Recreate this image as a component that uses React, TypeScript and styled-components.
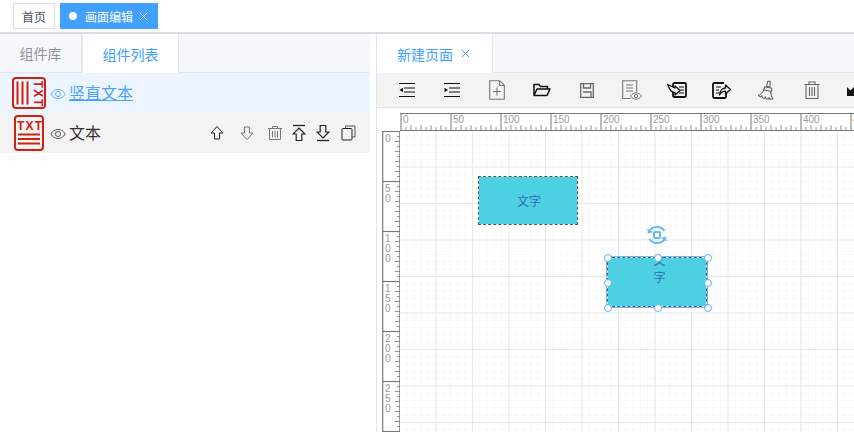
import React from 'react';
import styled, { createGlobalStyle } from 'styled-components';

const GlobalStyle = createGlobalStyle`
  html, body {
    margin: 0;
    padding: 0;
    background: #fff;
    overflow: hidden;
  }
  * {
    box-sizing: border-box;
  }
  body {
    font-family: "Liberation Sans", "Noto Sans CJK SC", sans-serif;
  }
`;

const Page = styled.div`
  width: 854px;
  height: 432px;
  display: flex;
  flex-direction: column;
  overflow: hidden;
`;

const TopBar = styled.div`
  height: 34px;
  flex-shrink: 0;
  display: flex;
  align-items: flex-start;
  gap: 5px;
  padding: 3px 0 0 13px;
  border-bottom: 2px solid #d8dce5;
`;

const TopTab = styled.div<{ $active?: boolean }>`
  height: 26px;
  display: flex;
  align-items: center;
  padding: ${(p) => (p.$active ? '0 9px 0 8px' : '0 8px')};
  font-size: 12px;
  color: ${(p) => (p.$active ? '#fff' : '#495060')};
  background: ${(p) => (p.$active ? '#42a0ff' : '#fff')};
  border: 1px solid ${(p) => (p.$active ? '#42a0ff' : '#d8dce5')};
`;

const Dot = styled.span`
  width: 8px;
  height: 8px;
  border-radius: 50%;
  background: #fff;
  margin-right: 8px;
`;

const Close = styled.svg`
  width: 9px;
  height: 9px;
  margin-left: 6px;
  flex-shrink: 0;
`;

const Main = styled.div`
  flex: 1;
  display: flex;
  min-height: 0;
`;

const LeftPanel = styled.div`
  width: 370px;
  flex-shrink: 0;
  display: flex;
  flex-direction: column;
`;

const RightPanel = styled.div`
  flex: 1;
  margin-left: 6px;
  min-width: 0;
  display: flex;
  flex-direction: column;
  border-left: 1px solid #dfe3ea;
`;

const TabHeader = styled.div`
  height: 39px;
  flex-shrink: 0;
  display: flex;
  background: #f5f7fa;
  border-bottom: 1px solid #e4e7ed;
`;

const PanelTab = styled.div<{ $active?: boolean; $width: number }>`
  width: ${(p) => p.$width}px;
  height: ${(p) => (p.$active ? '39px' : '38px')};
  display: flex;
  align-items: center;
  justify-content: center;
  font-size: 14px;
  color: ${(p) => (p.$active ? '#409eff' : '#909399')};
  background: ${(p) => (p.$active ? '#fff' : 'transparent')};
  border-right: 1px solid #e4e7ed;
  border-left: ${(p) => (p.$active ? '1px solid #e4e7ed' : 'none')};
`;

const PageTab = styled(PanelTab)`
  border-left: none;
  gap: 2px;
  justify-content: flex-start;
  padding-left: 20px;
`;

const Row = styled.div<{ $selected?: boolean }>`
  height: 40px;
  display: flex;
  align-items: center;
  background: ${(p) => (p.$selected ? '#ecf5ff' : '#f3f3f3')};
  color: ${(p) => (p.$selected ? '#4ba3ff' : '#333')};
`;

const RowIcon = styled.div`
  width: 50px;
  padding-left: 8px;
  flex-shrink: 0;
  display: flex;
  justify-content: center;
`;

const EyeIcon = styled.svg`
  flex-shrink: 0;
  margin: 1px 3px 0 0;
`;

const RowName = styled.span<{ $selected?: boolean }>`
  font-size: 16px;
  line-height: 20px;
  margin-top: 2px;
  text-decoration: ${(p) => (p.$selected ? 'underline' : 'none')};
`;

const RowTools = styled.div`
  margin-left: auto;
  display: flex;
  align-items: center;
  padding-right: 10px;
`;

const RowTool = styled.div<{ $width: number }>`
  width: ${(p) => p.$width}px;
  display: flex;
  justify-content: center;
`;

const Toolbar = styled.div`
  height: 35px;
  flex-shrink: 0;
  display: flex;
  align-items: center;
  padding-left: 7px;
  background: #f3f3f3;
  border-bottom: 1px solid #e4e4e4;
  overflow: hidden;
`;

const ToolButton = styled.div`
  width: 45px;
  flex-shrink: 0;
  display: flex;
  align-items: center;
  justify-content: center;
`;

const Workspace = styled.div`
  flex: 1;
  min-height: 0;
  padding-top: 5px;
  display: flex;
  flex-direction: column;
  background: #fff;
`;

const TopRuler = styled.svg`
  display: block;
  margin-left: 23px;
  flex-shrink: 0;
`;

const WorkRow = styled.div`
  flex: 1;
  min-height: 0;
  display: flex;
  padding-left: 5px;
`;

const SideRuler = styled.svg`
  display: block;
  flex-shrink: 0;
`;

const Stage = styled.div`
  position: relative;
  flex: 1;
  overflow: hidden;
  background-image:
    linear-gradient(to right, #e8e8e8 1px, transparent 1px),
    linear-gradient(to bottom, #e8e8e8 1px, transparent 1px),
    linear-gradient(to right, #f8f8f8 1px, transparent 1px),
    linear-gradient(to bottom, #f8f8f8 1px, transparent 1px);
  background-size: 36.5px 36.5px, 36.5px 36.5px, 7.3px 7.3px, 7.3px 7.3px;
  background-position: -1px 0, 0 -1px, -1px 0, 0 -1px;
`;

const Shape = styled.div<{ $x: number; $y: number; $h: number; $narrow?: boolean }>`
  position: absolute;
  left: ${(p) => p.$x}px;
  top: ${(p) => p.$y}px;
  width: 100px;
  height: ${(p) => p.$h}px;
  background: #4dd0e1;
  background-clip: padding-box;
  border: 1px dashed #555;
  color: #2f6db5;
  font-size: 12px;
  line-height: 17px;
  display: flex;
  flex-direction: ${(p) => (p.$narrow ? 'column' : 'row')};
  align-items: center;
  justify-content: ${(p) => (p.$narrow ? 'flex-start' : 'center')};
  padding: ${(p) => (p.$narrow ? '0 0 0 5px' : '3px 0 0 2px')};
`;

const FirstChar = styled.span`
  margin-top: -5px;
`;

const Selection = styled.div`
  position: absolute;
  left: 206px;
  top: 125px;
  width: 102px;
  height: 52px;
  border: 1px solid #66b8ff;
`;

const Handle = styled.span<{ $x: number; $y: number }>`
  position: absolute;
  left: ${(p) => p.$x - 4}px;
  top: ${(p) => p.$y - 4}px;
  width: 8px;
  height: 8px;
  border-radius: 50%;
  background: #fff;
  border: 1px solid #59b4ff;
`;

const RotateIcon = styled.svg`
  position: absolute;
  left: 246px;
  top: 94px;
`;

const RED = '#d0200f';

const VerticalTextIcon = () => (
  <svg width="34" height="32" viewBox="0 0 34 32">
    <rect x="1" y="1" width="32" height="30" rx="3" fill="none" stroke={RED} strokeWidth="2" />
    <path d="M5.500 4.500v23M10.500 4.500v23M15.500 4.500v23" stroke={RED} strokeWidth="2" />
    <text
      transform="translate(21.500 3.500) rotate(90)"
      fill={RED}
      fontFamily="Liberation Sans, sans-serif"
      fontWeight="700"
      fontSize="12"
      letterSpacing="1.500"
    >
      TXT
    </text>
  </svg>
);

const TextIcon = () => (
  <svg width="30" height="36" viewBox="0 0 30 36">
    <rect x="1" y="1" width="28" height="34" rx="3" fill="none" stroke={RED} strokeWidth="2" />
    <text x="3" y="14.500" fill={RED} fontFamily="Liberation Sans, sans-serif" fontWeight="700" fontSize="12" letterSpacing="1.200">
      TXT
    </text>
    <path d="M4 19.500h22M4 24h22M4 28.500h22" stroke={RED} strokeWidth="1.800" />
  </svg>
);

const Eye = ({ color }: { color: string }) => (
  <EyeIcon width="16" height="12" viewBox="0 0 16 12">
    <path d="M.8 6C2.500 3 5 1.500 8 1.500S13.500 3 15.200 6C13.500 9 11 10.500 8 10.500S2.500 9 .8 6z" fill="none" stroke={color} strokeWidth="1" />
    <circle cx="8" cy="6" r="2.500" fill="none" stroke={color} strokeWidth="1" />
  </EyeIcon>
);

const Line = { fill: 'none', stroke: '#222', strokeWidth: 1 };

const ArrowUp = () => (
  <svg width="16" height="16" viewBox="0 0 16 16">
    <path d="M8 1.500 14 8h-3.500v6h-5V8H2z" {...Line} />
  </svg>
);

const ArrowDown = () => (
  <svg width="16" height="16" viewBox="0 0 16 16">
    <path d="M8 14.500 2 8h3.500V2h5v6H14z" {...Line} stroke="#777" />
  </svg>
);

const SmallTrash = () => (
  <svg width="16" height="16" viewBox="0 0 16 16">
    <path d="M1 3.500h14M5.500 3.500V1.500h5v2M2.500 3.500v11h11v-11M5.500 6v6.500M8 6v6.500M10.500 6v6.500" {...Line} stroke="#777" />
  </svg>
);

const ArrowTop = () => (
  <svg width="14" height="18" viewBox="0 0 14 18">
    <path d="M1 1.500h12" {...Line} strokeWidth="1.300" />
    <path d="M7 4 13 10h-3.200v6.500H4.200V10H1z" {...Line} strokeWidth="1.200" />
  </svg>
);

const ArrowBottom = () => (
  <svg width="14" height="18" viewBox="0 0 14 18">
    <path d="M1 16.500h12" {...Line} strokeWidth="1.300" />
    <path d="M7 14 13 8H9.800V1.500H4.200V8H1z" {...Line} strokeWidth="1.200" />
  </svg>
);

const CopyIcon = () => (
  <svg width="15" height="16" viewBox="0 0 15 16">
    <path d="M4.500 3V1h9.500v11h-2.500" {...Line} stroke="#555" />
    <rect x="1" y="3.500" width="10" height="11.500" rx="1" {...Line} />
  </svg>
);

const IndentLeft = () => (
  <svg width="16" height="16" viewBox="0 0 16 16">
    <path d="M0 1.500h16M5 6h11M5 10h11M0 14.500h16" stroke="#111" strokeWidth="1.200" fill="none" />
    <path d="M0.500 8 4 5.800v4.400z" fill="#111" />
  </svg>
);

const IndentRight = () => (
  <svg width="16" height="16" viewBox="0 0 16 16">
    <path d="M0 1.500h16M5 6h11M5 10h11M0 14.500h16" stroke="#111" strokeWidth="1.200" fill="none" />
    <path d="M4 8 .5 5.800v4.400z" fill="#111" />
  </svg>
);

const NewFile = () => (
  <svg width="16" height="20" viewBox="0 0 16 20">
    <path d="M.7.700h10l4.600 4.600v14H.7zM10.500.700v4.800h4.800M8 7.500v8M4 11.500h8" fill="none" stroke="#777" strokeWidth="1.100" />
  </svg>
);

const OpenFolder = () => (
  <svg width="18" height="14" viewBox="0 0 18 14">
    <path d="M1 12.500V1.500h5l1.500 2h7v2.500M1 12.500 4 6h13l-3 6.500z" fill="none" stroke="#111" strokeWidth="1.500" strokeLinejoin="round" />
  </svg>
);

const SaveFile = () => (
  <svg width="14" height="15" viewBox="0 0 14 15">
    <path d="M.7.700h12.600v13.600H.7zM3.500.700v4.300h7V.700M3 9h8v5.300" fill="none" stroke="#666" strokeWidth="1.300" />
  </svg>
);

const PreviewFile = () => (
  <svg width="20" height="20" viewBox="0 0 20 20">
    <path d="M9 18.500H.7V.7h14v11" fill="none" stroke="#777" strokeWidth="1.100" />
    <path d="M4 5h7M4 8h7M4 11h7" stroke="#777" strokeWidth="1.100" />
    <path d="M8.500 16c1.500-2.300 3.500-3.200 5.500-3.200s4 .9 5.500 3.200c-1.500 2.300-3.500 3.200-5.500 3.200S10 18.300 8.500 16z" fill="#f3f3f3" stroke="#777" strokeWidth="1" />
    <circle cx="14" cy="16" r="1.700" fill="none" stroke="#777" strokeWidth="1" />
  </svg>
);

const ImportFile = () => (
  <svg width="20" height="16" viewBox="0 0 20 16">
    <rect x="6" y="1" width="13" height="14" rx="1.500" fill="none" stroke="#111" strokeWidth="1.800" />
    <path d="M12 5h5M13 8h4M12 11h5" stroke="#111" strokeWidth="1.200" />
    <path d="M.8 2.500 8 6V4l5 4.500L8 13v-2.300C4.500 10.300 2 7 .8 2.500z" fill="#f3f3f3" stroke="#111" strokeWidth="1.300" strokeLinejoin="round" />
  </svg>
);

const ExportFile = () => (
  <svg width="19" height="17" viewBox="0 0 19 17">
    <path d="M14 11v3.500a1.500 1.500 0 0 1-1.500 1.500h-10A1.500 1.500 0 0 1 1 14.500v-12A1.500 1.500 0 0 1 2.500 1H12" fill="none" stroke="#111" strokeWidth="1.800" />
    <path d="M4 5h5M4 8h3M4 11h3" stroke="#111" strokeWidth="1.200" />
    <path d="M7.500 13c.3-4 2.800-7 6-7V3l5 4.500-5 4.500V9.200c-2.500 0-4.500 1.300-6 3.800z" fill="#f3f3f3" stroke="#111" strokeWidth="1.300" strokeLinejoin="round" />
  </svg>
);

const Broom = () => (
  <svg width="19" height="20" viewBox="0 0 19 20">
    <path d="M10.800 1.100 13.300 1.500 12.800 7 9.500 6.500zM7.500 6.800l7.300 1.400-.4 3.300-7.600-1.500z" fill="none" stroke="#555" strokeWidth="1" strokeLinejoin="round" />
    <path d="M6.800 10c-1 2.500-3 4.500-5.800 5.500l3 1.500.8-1.500.4 2.300 2.500.7.6-1.800.7 2.100 2.600.4.400-1.700.8 1.800 3.300-.4c-2-2.500-2.300-5.400-2.100-7.400" fill="none" stroke="#555" strokeWidth="1" strokeLinejoin="round" />
  </svg>
);

const BigTrash = () => (
  <svg width="16" height="18" viewBox="0 0 16 18">
    <path d="M.5 3.500h15M5 3.500V1h6v2.500M2 3.500v14h12v-14M5.500 6v9M8 6v9M10.500 6v9" fill="none" stroke="#666" strokeWidth="1.100" />
  </svg>
);

const CornerArrow = () => (
  <svg width="20" height="16" viewBox="0 0 20 16">
    <path d="M0 5v9h9l-2.500-2.500L11 7 8 4 3.500 8.500z" fill="#111" />
  </svg>
);

const toolIcons = [
  <IndentLeft key="a" />,
  <IndentRight key="b" />,
  <NewFile key="c" />,
  <OpenFolder key="d" />,
  <SaveFile key="e" />,
  <PreviewFile key="f" />,
  <ImportFile key="g" />,
  <ExportFile key="h" />,
  <Broom key="i" />,
  <BigTrash key="j" />,
  <CornerArrow key="k" />,
];

const rowTools = [
  { width: 30, icon: <ArrowUp /> },
  { width: 30, icon: <ArrowDown /> },
  { width: 26, icon: <SmallTrash /> },
  { width: 22, icon: <ArrowTop /> },
  { width: 26, icon: <ArrowBottom /> },
  { width: 24, icon: <CopyIcon /> },
];

function HorizontalRuler() {
  const width = 454;
  const ticks = [];
  for (let x = 0; x <= width; x += 5) {
    const major = x % 50 === 0;
    const mid = x % 10 === 0;
    const y1 = major ? 0 : mid ? 12 : 14;
    ticks.push(<line key={x} x1={x + 1} x2={x + 1} y1={y1} y2={18} stroke="#777" strokeWidth={major ? 1 : 0.8} />);
    if (major) {
      ticks.push(
        <text key={'t' + x} x={x + 3} y={10} fontSize="10" fill="#999" fontFamily="Liberation Sans, sans-serif">
          {x}
        </text>,
      );
    }
  }
  return (
    <TopRuler width={width} height={18}>
      <path d={`M0 .5H${width}M0 17.500H${width}`} stroke="#777" strokeWidth="1" />
      {ticks}
    </TopRuler>
  );
}

function VerticalRuler() {
  const height = 302;
  const items = [];
  for (let y = 0; y <= height; y += 5) {
    const major = y % 50 === 0;
    const mid = y % 10 === 0;
    const x1 = major ? 0 : mid ? 13 : 15;
    items.push(<line key={y} y1={y + 0.5} y2={y + 0.5} x1={x1} x2={18} stroke="#777" strokeWidth={major ? 1.2 : 0.8} />);
    if (major) {
      String(y)
        .split('')
        .forEach((digit, i) => {
          items.push(
            <text key={`${y}-${i}`} x={3} y={y + 11 + i * 10} fontSize="10" fill="#999" fontFamily="Liberation Sans, sans-serif">
              {digit}
            </text>,
          );
        });
    }
  }
  return (
    <SideRuler width={18} height={height}>
      <path d={`M.7 0V${height}`} stroke="#777" strokeWidth="1.200" />
      <path d={`M17.500 0V${height}`} stroke="#999" strokeWidth="1" />
      {items}
    </SideRuler>
  );
}

const CloseGlyph = ({ color }: { color: string }) => (
  <Close viewBox="0 0 9 9">
    <path d="M.8.8l7.400 7.400M8.200.8.800 8.200" stroke={color} strokeWidth="1" fill="none" />
  </Close>
);

const handles = [
  [1, 1],
  [51, 1],
  [101, 1],
  [1, 26],
  [101, 26],
  [1, 51],
  [51, 51],
  [101, 51],
];

export default function App() {
  return (
    <Page>
      <GlobalStyle />
      <TopBar>
        <TopTab>首页</TopTab>
        <TopTab $active>
          <Dot />
          画面编辑
          <CloseGlyph color="#fff" />
        </TopTab>
      </TopBar>
      <Main>
        <LeftPanel>
          <TabHeader>
            <PanelTab $width={82}>组件库</PanelTab>
            <PanelTab $width={97} $active>
              组件列表
            </PanelTab>
          </TabHeader>
          <Row $selected>
            <RowIcon>
              <VerticalTextIcon />
            </RowIcon>
            <Eye color="#66b1ff" />
            <RowName $selected>竖直文本</RowName>
          </Row>
          <Row>
            <RowIcon>
              <TextIcon />
            </RowIcon>
            <Eye color="#555" />
            <RowName>文本</RowName>
            <RowTools>
              {rowTools.map((tool, i) => (
                <RowTool key={i} $width={tool.width}>
                  {tool.icon}
                </RowTool>
              ))}
            </RowTools>
          </Row>
        </LeftPanel>
        <RightPanel>
          <TabHeader>
            <PageTab $width={116} $active>
              新建页面
              <CloseGlyph color="#409eff" />
            </PageTab>
          </TabHeader>
          <Toolbar>
            {toolIcons.map((icon) => (
              <ToolButton key={icon.key}>{icon}</ToolButton>
            ))}
          </Toolbar>
          <Workspace>
            <HorizontalRuler />
            <WorkRow>
              <VerticalRuler />
              <Stage>
                <Shape $x={78} $y={45} $h={49}>
                  文字
                </Shape>
                <RotateIcon width="22" height="20" viewBox="0 0 22 20">
                  <path d="M2.500 8C3.500 4 7 2 11 2c3.500 0 6 1.500 7.500 4" fill="none" stroke="#66b8ff" strokeWidth="2" />
                  <path d="M1 3.500 2.500 8.500 7 7z" fill="#66b8ff" />
                  <path d="M19.500 12c-1 4-4.500 6-8.500 6-3.500 0-6-1.500-7.500-4" fill="none" stroke="#66b8ff" strokeWidth="2" />
                  <path d="M21 16.500l-1.500-5-4.500 1.500z" fill="#66b8ff" />
                  <rect x="8" y="7" width="6" height="6" rx="1" fill="none" stroke="#66b8ff" strokeWidth="2" />
                </RotateIcon>
                <Shape $x={207} $y={126} $h={50} $narrow>
                  <FirstChar>文</FirstChar>
                  <span>字</span>
                </Shape>
                <Selection>
                  {handles.map(([x, y]) => (
                    <Handle key={`${x}-${y}`} $x={x} $y={y} />
                  ))}
                </Selection>
              </Stage>
            </WorkRow>
          </Workspace>
        </RightPanel>
      </Main>
    </Page>
  );
}
